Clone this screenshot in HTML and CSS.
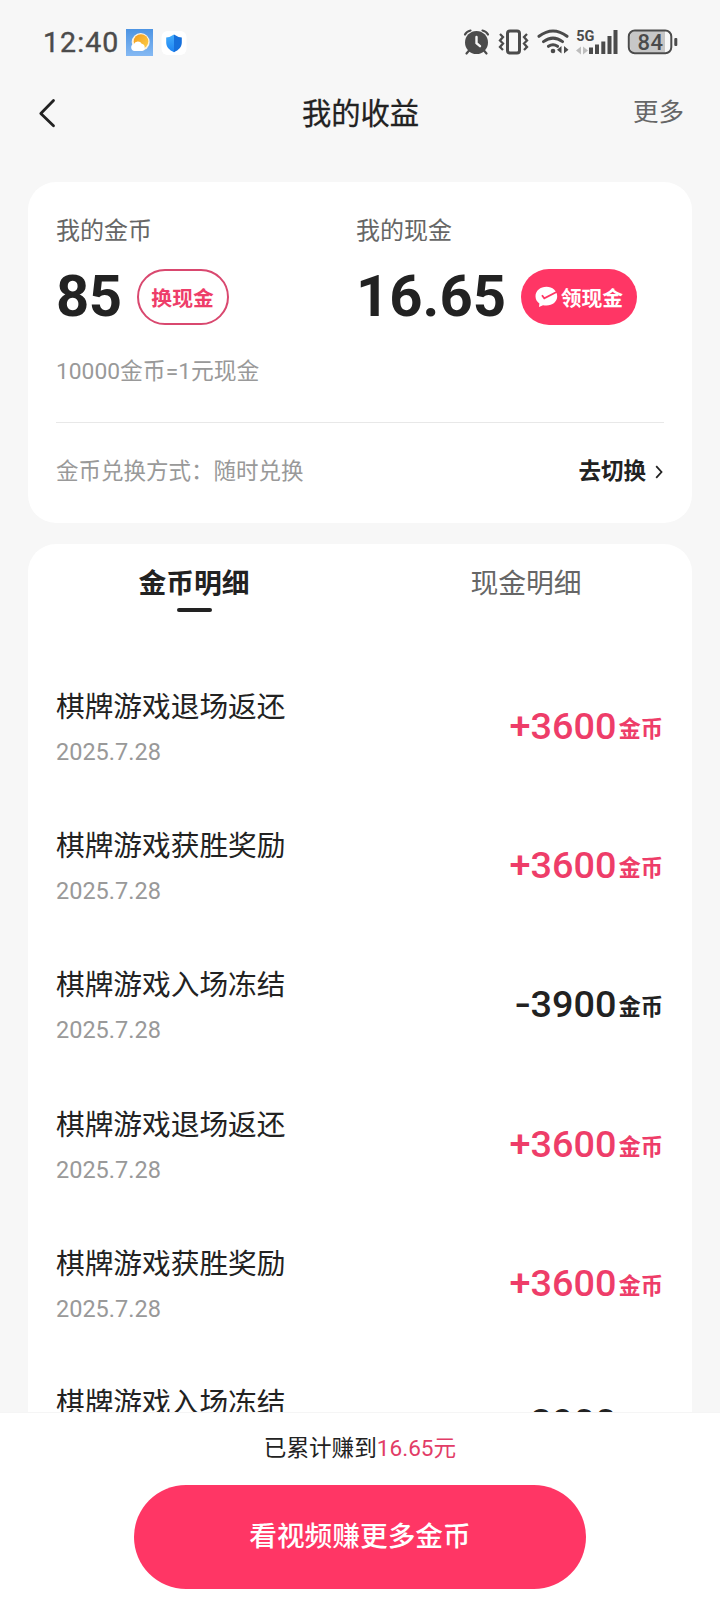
FILE: index.html
```html
<!DOCTYPE html>
<html lang="zh-CN">
<head>
<meta charset="utf-8">
<title>我的收益</title>
<link rel="stylesheet" href="styles.css">
</head>
<body>
<div class="screen">
  <div class="status">
    <span class="time">12:40</span>
    <svg class="weather" width="27" height="27" viewBox="0 0 27 27"><defs><linearGradient id="sky" x1="0" y1="0" x2="0" y2="1"><stop offset="0" stop-color="#4d94e3"/><stop offset="1" stop-color="#85b9f3"/></linearGradient><linearGradient id="sun" x1="0" y1="0" x2="1" y2="1"><stop offset="0" stop-color="#f59a1c"/><stop offset="1" stop-color="#fbd04a"/></linearGradient></defs><rect width="27" height="27" fill="url(#sky)"/><circle cx="14.700" cy="13" r="9" fill="#fff3df"/><circle cx="15" cy="12.500" r="7.300" fill="url(#sun)"/><path d="M8.500 22a3.500 3.500 0 0 1-.6-6.900 4.300 4.300 0 0 1 7.800-.4 3.700 3.700 0 0 1-.2 7.300z" fill="#fff"/></svg>
    <svg class="shield" width="27" height="27" viewBox="0 0 27 27"><defs><linearGradient id="guard" x1="0" y1="0" x2="0" y2="1"><stop offset="0" stop-color="#43adfb"/><stop offset="1" stop-color="#1d83f2"/></linearGradient></defs><rect x=".5" y="2" width="25" height="24" rx="6" fill="#fff"/><path d="M13 5.500Q9.500 8 5.200 8.600v5c0 4.500 3 7.600 7.800 9.600z" fill="url(#guard)"/><path d="M13 5.500Q16.500 8 20.800 8.600v5c0 4.500-3 7.600-7.800 9.600z" fill="#1670dc"/></svg>
    <span class="spacer"></span>
    <svg width="216" height="28" viewBox="464 28 216 28" fill="none" stroke="#4b4b4b">
      <circle cx="477.500" cy="42.500" r="11.500" fill="#4b4b4b" stroke="none"/>
      <path d="M466 34.500q1.500-3 5.500-4M489 34.500q-1.500-3-5.500-4M470.500 50l-3 3.500M484.500 50l3 3.500" stroke-width="2.200" stroke-linecap="round"/>
      <path d="M477.500 37v6.200l3.500 3" stroke="#f7f7f7" stroke-width="2.400" stroke-linecap="round"/>
      <rect x="508.500" y="31" width="12" height="22" rx="2.500" stroke-width="3"/>
      <path d="M501 34l3 3-3 3.500 3 3-3 3.500 3 3M528 34l-3 3 3 3.500-3 3 3 3.500-3 3" stroke-width="2.300"/>
      <path d="M540 36.300q14-10.500 28 0M544.500 41.600q9.500-7 19 0M549.500 46.300q4.500-3.200 9 0" stroke-width="3" stroke-linecap="round"/>
      <circle cx="554" cy="51" r="2.300" fill="#4b4b4b" stroke="none"/>
      <path d="M562.500 46v7.500l-4.500-3.700zM565 46v7.500l4.500-3.700z" fill="#4b4b4b" stroke="none"/>
      <path d="M582 46.500v8l-5-4zM584 46.500v8l5-4z" fill="#bdbdbd" stroke="none"/>
      <path d="M590 47.500h4V54h-4zM596 44.500h4V54h-4zM602.300 41.500h4V54h-4zM608.500 36h4v18h-4zM614.500 30h4v24h-4z" fill="#4b4b4b" stroke="none"/>
      <text class="net" x="577.300" y="41.300">5G</text>
      <path d="M637 31h29v21.500h-29q-6 0-6-6v-9.500q0-6 6-6z" fill="#c7c7c7" stroke="none"/>
      <rect x="629.800" y="30.500" width="42.500" height="22.800" rx="6" stroke-width="2"/>
      <rect x="675.300" y="38" width="3" height="8" rx="1" fill="#4b4b4b" stroke="none"/>
      <text class="battery" x="638.500" y="50">84</text>
    </svg>
  </div>

  <header class="nav">
    <svg width="18" height="30" viewBox="0 0 18 30"><path d="M15.500 2.500 2.800 15.500l12.700 12.300" fill="none" stroke="#222" stroke-width="2.800" stroke-linecap="round" stroke-linejoin="round"/></svg>
    <h1 class="title">我的收益</h1>
    <span class="more">更多</span>
  </header>

  <section class="card balance">
    <div class="accounts">
      <div class="account">
        <div class="label">我的金币</div>
        <div class="sum"><span class="figure">85</span><span class="pill outline">换现金</span></div>
        <div class="rate">10000金币=1元现金</div>
      </div>
      <div class="account">
        <div class="label">我的现金</div>
        <div class="sum"><span class="figure cash">16.65</span><span class="pill solid"><svg width="23" height="22" viewBox="0 0 23 22"><path d="M11.500.8C5.300.8.500 4.900.500 10.300c0 3 1.500 5.600 3.900 7.300L4 21l4-1.800c1.100.3 2.300.4 3.500.4 6 0 10.700-4 10.700-9.300S17.500.8 11.500.8z" fill="#fff"/><path d="M7 9.200l2.300 3.200L22 5.800" fill="none" stroke="#ff3665" stroke-width="1.800"/></svg>领现金</span></div>
      </div>
    </div>
    <div class="exchange">
      <span>金币兑换方式：随时兑换</span>
      <span class="switch">去切换<svg width="8" height="14" viewBox="0 0 8 14"><path d="M1.200 1.200 6.500 7l-5.300 5.800" fill="none" stroke="#222" stroke-width="1.800"/></svg></span>
    </div>
  </section>

  <section class="card details">
    <div class="tabs"><div class="tab active">金币明细</div><div class="tab">现金明细</div></div>
    <div class="list">
      <div class="row"><div><div class="name">棋牌游戏退场返还</div><div class="date">2025.7.28</div></div><div class="amount gain">+3600<small>金币</small></div></div>
      <div class="row"><div><div class="name">棋牌游戏获胜奖励</div><div class="date">2025.7.28</div></div><div class="amount gain">+3600<small>金币</small></div></div>
      <div class="row"><div><div class="name">棋牌游戏入场冻结</div><div class="date">2025.7.28</div></div><div class="amount"><i class="minus">-</i>3900<small>金币</small></div></div>
      <div class="row"><div><div class="name">棋牌游戏退场返还</div><div class="date">2025.7.28</div></div><div class="amount gain">+3600<small>金币</small></div></div>
      <div class="row"><div><div class="name">棋牌游戏获胜奖励</div><div class="date">2025.7.28</div></div><div class="amount gain">+3600<small>金币</small></div></div>
      <div class="row"><div><div class="name">棋牌游戏入场冻结</div></div><div class="amount"><i class="minus">-</i>3900<small>金币</small></div></div>
    </div>
  </section>

  <footer class="footer">
    <div class="total">已累计赚到<span>16.65元</span></div>
    <div class="cta">看视频赚更多金币</div>
  </footer>
</div>
</body>
</html>
```
FILE: styles.css
```css
* { box-sizing: border-box; }
body {
  margin: 0;
  background: #f7f7f7;
  color: #222;
  font-family: Roboto, "Noto Sans CJK SC", sans-serif;
}
.screen {
  width: 720px;
  height: 1610px;
  display: flex;
  flex-direction: column;
  overflow: hidden;
  background: #f7f7f7;
}
.status {
  height: 84px;
  flex: none;
  display: flex;
  align-items: center;
  padding: 0 41px 0 43px;
}
.time {
  width: 83px;
  padding-top: 1px;
  font-size: 28.500px;
  letter-spacing: 1.1px;
  color: #4b4b4b;
  -webkit-text-stroke: 0.4px #4b4b4b;
}
.shield { margin-left: 8px; }
.spacer { flex: 1; }
.net { font: 700 14.500px Roboto, sans-serif; fill: #4b4b4b; stroke: none; }
.battery { font: 500 22px Roboto, sans-serif; fill: #4b4b4b; stroke: none; letter-spacing: 0.5px; }

.nav {
  height: 98px;
  flex: none;
  display: grid;
  grid-template-columns: 1fr auto 1fr;
  align-items: center;
  padding: 0 36px 40px 37px;
}
.nav svg { margin-left: 1px; }
.title {
  margin: 0;
  padding-top: 2px;
  font-size: 29.300px;
  line-height: 44px;
  font-weight: 400;
  -webkit-text-stroke: 0.3px #222;
}
.more { justify-self: end; font-size: 25.500px; line-height: 36px; color: #666; padding-bottom: 3px; }

.card {
  margin: 0 28px;
  padding: 0 28px;
  background: #fff;
  border-radius: 28px;
}
.balance { height: 341px; flex: none; }
.accounts {
  height: 241px;
  display: grid;
  grid-template-columns: 300px 1fr;
  border-bottom: 1px solid #e8e8e8;
}
.account { padding-top: 31px; }
.label { font-size: 24px; line-height: 36px; color: #666; }
.sum {
  height: 56px;
  margin-top: 20px;
  display: flex;
  align-items: center;
}
.figure { height: 56px; font-size: 58px; line-height: 54px; font-weight: 700; letter-spacing: -0.5px; }
.cash { letter-spacing: 0; }
.pill {
  height: 56px;
  margin-left: 15px;
  padding-bottom: 1px;
  display: flex;
  align-items: center;
  justify-content: center;
  border-radius: 28px;
  font-size: 20.800px;
  font-weight: 700;
}
.outline { width: 92px; border: 2px solid #d9486f; color: #ee3d69; }
.solid { width: 116px; gap: 3px; background: #ff3665; color: #fff; }
.rate { margin-top: 30px; font-size: 22.800px; line-height: 34px; color: #999; }
.exchange {
  height: 98px;
  padding-bottom: 7px;
  display: flex;
  align-items: center;
  justify-content: space-between;
  font-size: 22.500px;
  color: #999;
}
.switch { display: flex; align-items: center; gap: 9px; color: #222; font-weight: 700; padding-right: 1px; }
.switch svg { margin-top: 7px; }

.details { height: 868px; flex: none; margin-top: 21px; border-radius: 28px 28px 0 0; overflow: hidden; }
.tabs { height: 104px; display: grid; grid-template-columns: 1fr 1fr; margin: 0 -28px; }
.tab {
  padding-top: 19px;
  display: flex;
  flex-direction: column;
  align-items: center;
  font-size: 27.800px;
  line-height: 42px;
  color: #666;
}
.active { color: #222; font-weight: 700; }
.active::after {
  content: "";
  width: 35px;
  height: 4px;
  margin-top: 3px;
  border-radius: 2px;
  background: #222;
}
.row {
  height: 139.200px;
  padding-top: 38px;
  display: flex;
  justify-content: space-between;
}
.name { font-size: 28.700px; line-height: 42px; }
.date { margin-top: 8px; font-size: 23.500px; line-height: 32px; color: #999; }
.amount {
  display: flex;
  align-items: baseline;
  padding: 18px 1px 0 0;
  font-size: 37.800px;
  line-height: 44px;
  font-weight: 500;
}
.amount small {
  position: relative;
  top: -2px;
  margin-left: 2px;
  font-size: 22.300px;
  font-weight: 700;
}
.minus { font-style: normal; transform: scaleX(1.25); transform-origin: right; }
.gain { color: #ee3d69; }

.footer {
  flex: 1;
  display: flex;
  flex-direction: column;
  align-items: center;
  border-top: 1px solid #f5f5f5;
  background: #fff;
}
.total { margin-top: 19px; font-size: 22.600px; line-height: 34px; }
.total span { color: #e23c67; }
.cta {
  width: 452px;
  height: 104px;
  margin-top: 19px;
  border-radius: 52px;
  background: #ff3665;
  color: #fff;
  font-size: 27.700px;
  line-height: 103px;
  font-weight: 500;
  text-align: center;
}
```
